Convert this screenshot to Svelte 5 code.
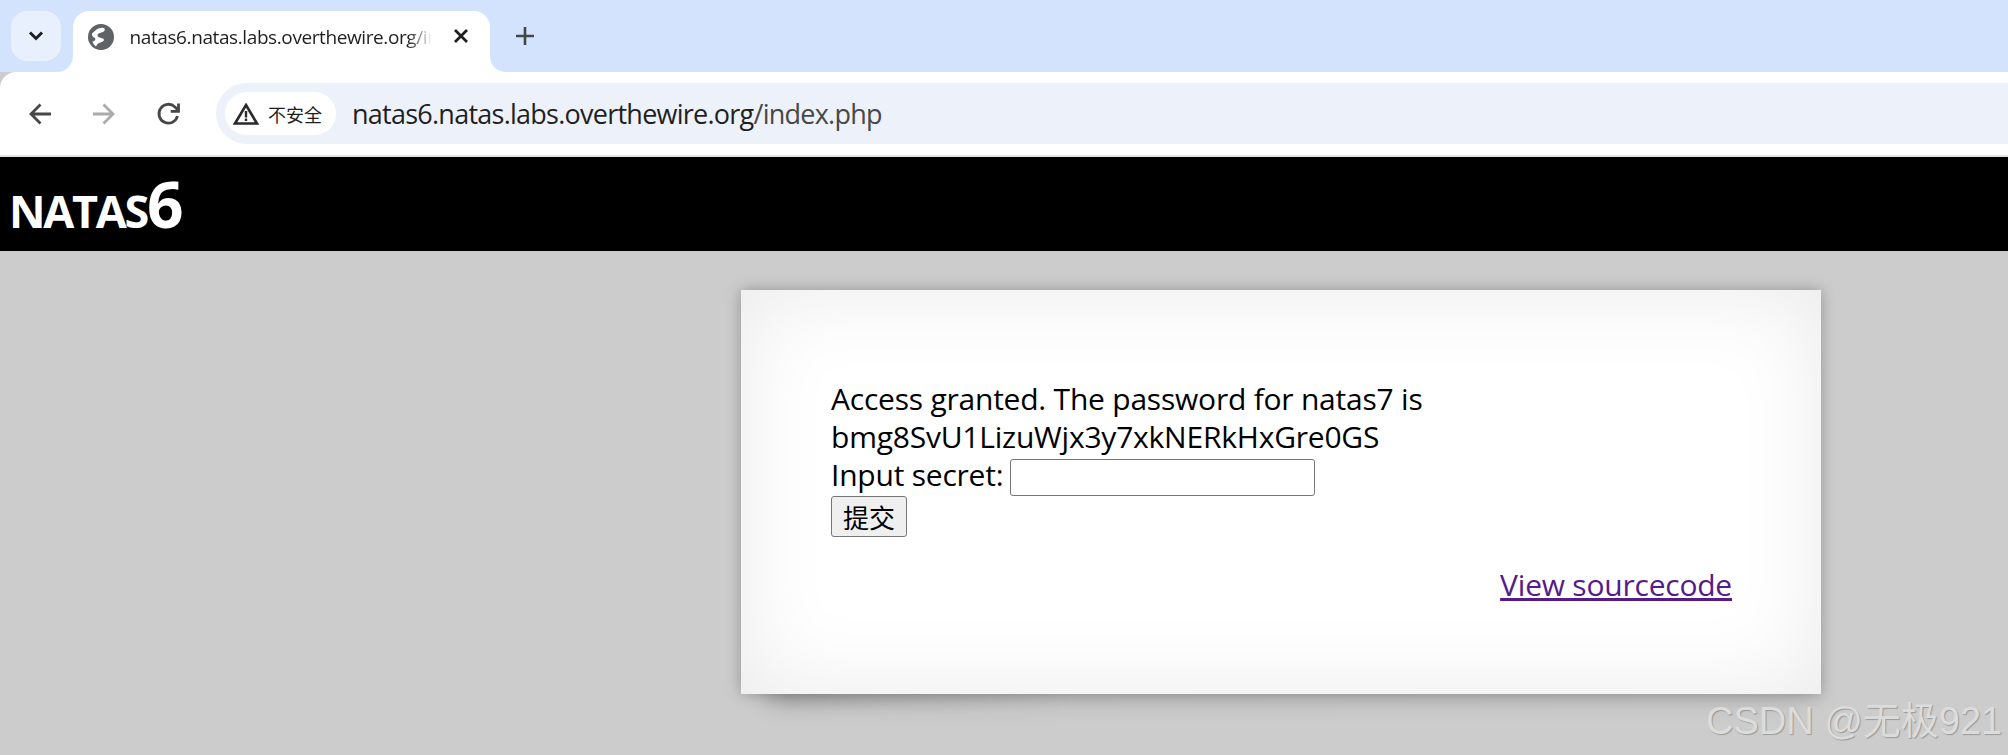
<script>
  let secret = $state('');
</script>

<div class="browser">
  <div class="tabstrip">
    <button class="tabsearch" aria-label="Search tabs">
      <svg viewBox="0 0 20 20" width="20" height="20"><path d="M4 6.500 10 12.500 16 6.500" fill="none" stroke="#1f1f1f" stroke-width="3"/></svg>
    </button>
    <div class="tab">
      <svg class="flare left" viewBox="0 0 16 16" width="16" height="16"><path d="M16 0V16H0C9 16 16 9 16 0Z" fill="#fff"/></svg>
      <svg class="globe" viewBox="0 0 26 26" width="26" height="26">
        <circle cx="13" cy="13" r="13" fill="#5f6368"/>
        <path d="M8.500 5.500C11 4.500 13 3.500 15.500 4 17.500 4.800 17 7 15 8 12.500 9 9.500 9 9.500 11.500 9.500 13.500 13 13.500 15 14.500 17 15.500 15.500 17.500 13.500 18 11 18.800 9 20 8 22.500 6 21 5 19.500 4.500 17.500 7 17 8 15.500 7 14 5 13 3.500 11.500 4 9.500 6 7 8.500 5.500ZM16.500 23c.5-2 2-3.500 4.500-4-1 2-2.500 3.300-4.500 4Z" fill="#fff"/>
      </svg>
      <span class="title">natas6.natas.labs.overthewire.org/index.php</span>
      <svg class="close" viewBox="0 0 16 16" width="16" height="16"><path d="M2 2 14 14M14 2 2 14" stroke="#1f1f1f" stroke-width="2.800" fill="none"/></svg>
      <svg class="flare right" viewBox="0 0 16 16" width="16" height="16"><path d="M0 0V16H16C7 16 0 9 0 0Z" fill="#fff"/></svg>
    </div>
    <svg class="plus" viewBox="0 0 18 18" width="18" height="18"><path d="M9 0V18M0 9H18" stroke="#444746" stroke-width="2.600"/></svg>
  </div>
  <div class="toolbar">
    <svg class="nav" viewBox="0 0 24 24" width="24" height="24"><path d="M23 12H3.500M12.500 2.500 3 12l9.500 9.500" fill="none" stroke="#474747" stroke-width="2.800"/></svg>
    <svg class="nav" viewBox="0 0 24 24" width="24" height="24"><path d="M1 12H20.500M11.500 2.500 21 12l-9.500 9.500" fill="none" stroke="#ababab" stroke-width="2.800"/></svg>
    <svg class="nav" viewBox="0 0 24 24" width="24" height="24"><path d="M21.500 14a9.400 9.400 0 1 1-2.600-9.100L22 8M22.500 1.500V9.300H14.700" fill="none" stroke="#474747" stroke-width="2.800"/></svg>
    <div class="omnibox">
      <div class="chip">
        <svg viewBox="0 0 26 22" width="26" height="22"><path d="M13 2 24 20.500H2Z" fill="none" stroke="#2a2a2a" stroke-width="2.600"/><path d="M13 8v6.500M13 15.500v2.400" stroke="#2a2a2a" stroke-width="2.400"/></svg>
        <span>不安全</span>
      </div>
      <span class="url">natas6.natas.labs.overthewire.org<span class="path">/index.php</span></span>
    </div>
  </div>
</div>

<header class="banner"><h1>natas<span class="num">6</span></h1></header>

<main class="card">
  <div class="body">
    Access granted. The password for natas7 is<br />
    bmg8SvU1LizuWjx3y7xkNERkHxGre0GS
    <form>
      <div class="field">Input secret: <input type="text" bind:value={secret} /></div>
      <button type="button" class="submit">提交</button>
    </form>
  </div>
  <div class="source"><a href="#source">View sourcecode</a></div>
</main>

<div class="watermark">CSDN @无极921</div>

<style>
  :global(html) { height: 100%; overflow: hidden; }
  :global(body) { margin: 0; height: 100%; background: #ccc; }
  .browser { font-family: "Open Sans", "Noto Sans CJK SC", sans-serif; }
  .tabstrip { height: 72px; background: #d3e3fd; display: flex; align-items: flex-start; position: relative; }
  .tabsearch { width: 50px; height: 50px; margin: 11px 0 0 11px; padding: 0; border: 0; border-radius: 16px; background: #e8f0fe; display: flex; align-items: center; justify-content: center; }
  .tab { position: relative; width: 417px; height: 61px; margin: 11px 0 0 12px; background: #fff; border-radius: 16px 16px 0 0; display: flex; align-items: flex-start; }
  .flare { position: absolute; bottom: 0; }
  .flare.left { left: -16px; }
  .flare.right { right: -16px; }
  .globe { margin: 13px 0 0 15px; flex: none; }
  .title { margin: 12px 0 0 15.500px; width: 302px; font-size: 19px; line-height: 28px; white-space: nowrap; overflow: hidden; color: #1f1f1f; letter-spacing: -0.4px;
    -webkit-mask-image: linear-gradient(90deg, #000 92%, transparent); mask-image: linear-gradient(90deg, #000 92%, transparent); }
  .close { margin: 17px 0 0 21px; flex: none; }
  .plus { margin: 27px 0 0 26px; }
  .toolbar { height: 83px; background: #fff; border-bottom: 2px solid #e3e3e3; border-radius: 16px 0 0 0; display: flex; align-items: center; }
  .nav { margin-left: 16px; margin-right: 24px; flex: none; }
  .nav:first-child { margin-left: 28px; }
  .omnibox { height: 61px; flex: 1; margin-left: 12px; background: #edf2fa; border-radius: 31px 0 0 31px; display: flex; align-items: center; }
  .chip { height: 43px; width: 111px; margin-left: 9px; border-radius: 22px; background: #fff; display: flex; align-items: center; padding-left: 8px; box-sizing: border-box; font-size: 18px; color: #1f1f1f; gap: 9px; flex: none; }
  .url { margin-left: 16px; font-size: 27px; color: #1f1f1f; letter-spacing: -0.75px; white-space: nowrap; }
  .path { color: #474747; }
  .banner { height: 94px; background: #000; color: #fff; }
  h1 { margin: 0; padding-left: 9px; font: 700 64px/94px "Open Sans", sans-serif; font-variant: small-caps; letter-spacing: -2.300px; }
  .card { position: relative; width: 1080px; height: 404px; margin: 39px 0 0 741px; padding: 90px 89px 0 90px; box-sizing: border-box; background: #fff;
    box-shadow: inset 0 0 90px rgba(0,0,0,.085), 0 0 14px rgba(0,0,0,.28); color: #000;
    font: 400 30px/38px "Open Sans", "Noto Sans CJK SC", sans-serif; letter-spacing: -0.22px; }
  .card::before { content: ""; position: absolute; z-index: -1; left: 28px; right: 10px; bottom: -6px; height: 22px; background: linear-gradient(90deg, rgba(0,0,0,.34), rgba(0,0,0,.14) 30%, rgba(0,0,0,.1)); filter: blur(12px); }
  form { margin: 0; }
  .field { height: 40px; }
  input { width: 305px; height: 37px; box-sizing: border-box; border: 1px solid #767676; border-radius: 3px; padding: 1px 2px; background: #fff; margin: 0 0 0 -1px; vertical-align: 4px; }
  .submit { width: 76px; height: 41px; padding: 0; border: 1px solid #767676; border-radius: 3px; background: #efefef; color: #000; font: 26px/36px "Noto Sans CJK SC", sans-serif; display: block; }
  .source { margin-top: 29px; text-align: right; }
  a { color: #551a8b; }
  .watermark { position: absolute; left: 1706px; top: 698px; font: 38px/46px "Liberation Sans", "Noto Sans CJK SC", sans-serif; color: #dcdcdc; text-shadow: 1px 1px 1px rgba(0,0,0,.25); white-space: nowrap; }
</style>
